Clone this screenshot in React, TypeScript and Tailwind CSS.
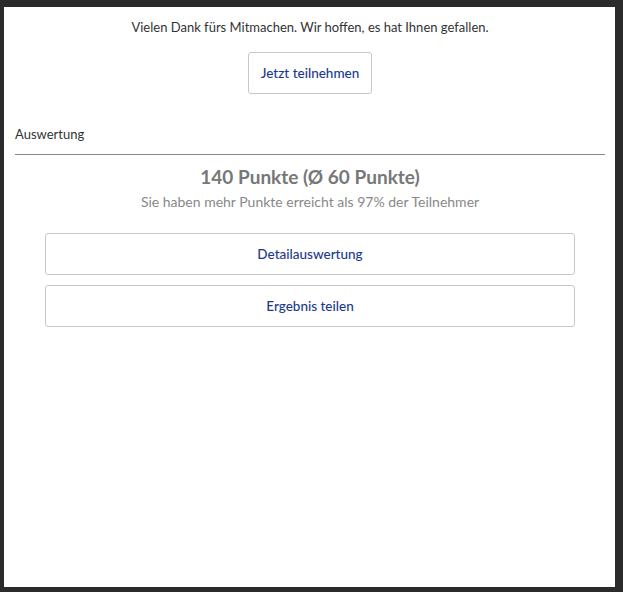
export default function App() {
  return (
    <div className="min-h-[592px] w-full bg-[#2b2b2b] pt-[7px] pl-[4px]" style={{ fontFamily: 'Lato, "Noto Sans", sans-serif' }}>
      <div className="h-[580px] w-[611px] bg-white pl-[11px] pr-[10px] pt-[10px]">
        <p className="text-center text-[13px] leading-[20px] text-[#333]">
          Vielen Dank fürs Mitmachen. Wir hoffen, es hat Ihnen gefallen.
        </p>
        <div className="mt-[15px] flex justify-center">
          <button className="h-[42px] w-[124px] rounded-[3px] border border-[#c8c8c8] bg-white text-[13.5px] font-medium text-[#1b3a8c]">
            Jetzt teilnehmen
          </button>
        </div>
        <div className="mt-[30px] border-b border-[#888] pb-[10px] text-[13px] leading-[20px] text-[#333]">
          Auswertung
        </div>
        <div className="mt-[11px] text-center text-[19px] font-bold leading-[22px] text-[#777]">
          140 Punkte (Ø 60 Punkte)
        </div>
        <div className="mt-[4px] text-center text-[14px] leading-[20px] text-[#888]">
          Sie haben mehr Punkte erreicht als 97% der Teilnehmer
        </div>
        <div className="mt-[21px] flex flex-col gap-[10px] px-[30px]">
          <button className="h-[42px] w-full rounded-[3px] border border-[#c8c8c8] bg-white text-[13.5px] font-medium text-[#1b3a8c]">
            Detailauswertung
          </button>
          <button className="h-[42px] w-full rounded-[3px] border border-[#c8c8c8] bg-white text-[13.5px] font-medium text-[#1b3a8c]">
            Ergebnis teilen
          </button>
        </div>
      </div>
    </div>
  );
}
